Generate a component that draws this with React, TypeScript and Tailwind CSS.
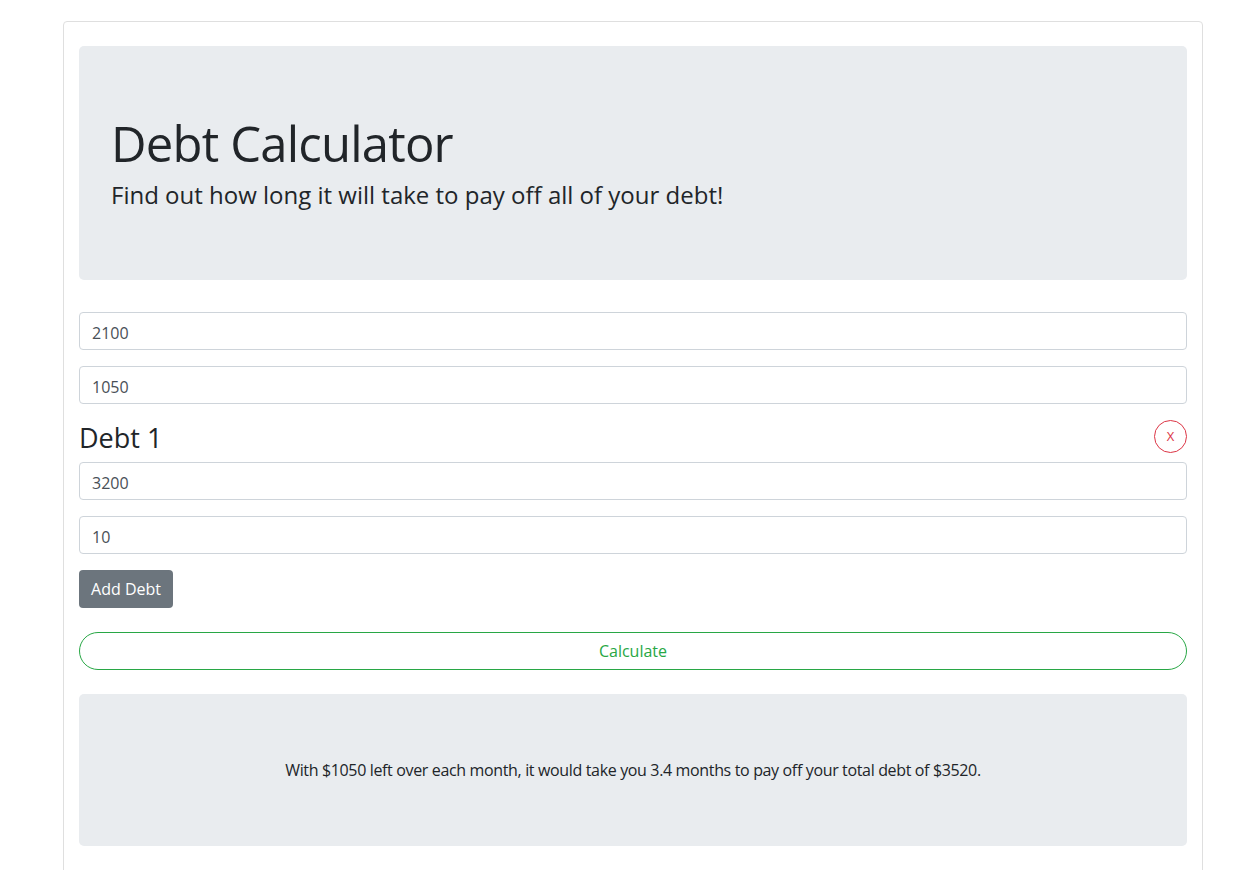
import React from 'react';

const font = { fontFamily: '"Open Sans", "Liberation Sans", sans-serif' };

function Field({ value }: { value: string }) {
  return (
    <input
      type="text"
      defaultValue={value}
      className="block w-full h-[38px] px-3 pt-[3px] border border-[#ced4da] rounded-[4px] text-base text-[#495057] bg-white outline-none"
    />
  );
}

export default function App() {
  return (
    <div className="min-h-[870px] bg-white pt-[21px]" style={font}>
      <div className="ml-[63px] w-[1140px] border border-[#dfdfdf] rounded-[4px] px-[15px] pt-[24px] pb-[30px]">
        <div className="h-[234px] bg-[#e9ecef] rounded-[5px] px-[32px] pt-[64px] text-[#212529]">
          <h1 className="text-[49px] leading-[67px] tracking-[-0.8px]">Debt Calculator</h1>
          <p className="mt-[3px] text-[24px] leading-[30px]">Find out how long it will take to pay off all of your debt!</p>
        </div>

        <div className="mt-[32px] flex flex-col gap-4">
          <Field value="2100" />
          <Field value="1050" />
        </div>

        <div className="mt-4 h-[42px] flex items-start justify-between">
          <h2 className="text-[27px] leading-[36px] text-[#212529]">Debt 1</h2>
          <button className="w-[33px] h-[33px] rounded-full border border-[#dc3545] text-[#dc3545] text-[13px] flex items-center justify-center">
            X
          </button>
        </div>

        <div className="flex flex-col gap-4">
          <Field value="3200" />
          <Field value="10" />
        </div>

        <button className="mt-4 h-[38px] w-[94px] bg-[#6c757d] text-white text-base rounded-[4px]">Add Debt</button>

        <button className="mt-[24px] block w-full h-[38px] rounded-full border border-[#28a745] text-[#28a745] text-base">
          Calculate
        </button>

        <div className="mt-[24px] bg-[#e9ecef] rounded-[5px] py-[64px] text-center text-base leading-6 tracking-[-0.35px] text-[#212529]">
          With $1050 left over each month, it would take you 3.4 months to pay off your total debt of $3520.
        </div>
      </div>
    </div>
  );
}
